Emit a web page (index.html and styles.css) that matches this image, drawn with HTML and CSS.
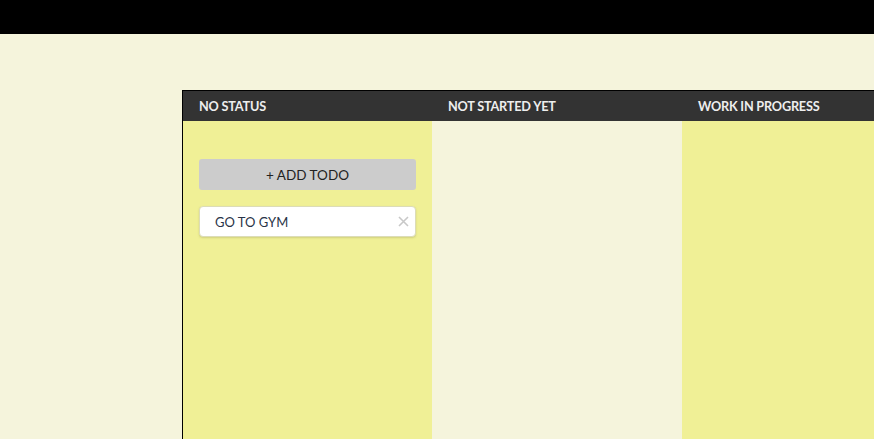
FILE: index.html
```html
<!DOCTYPE html>
<html>
<head>
<meta charset="utf-8">
<link rel="stylesheet" href="styles.css">
</head>
<body>
<div class="topbar"></div>
<main class="page">
  <section class="board">
    <div class="column yellow">
      <div class="col-head">NO STATUS</div>
      <div class="col-body">
        <button class="add-btn">+ ADD TODO</button>
        <div class="card">
          <span class="card-text">GO TO GYM</span>
          <svg class="close" width="11" height="11" viewBox="0 0 11 11"><path d="M1 1L10 10M10 1L1 10" stroke="#c8c8c8" stroke-width="1.6" fill="none"/></svg>
        </div>
      </div>
    </div>
    <div class="column beige">
      <div class="col-head">NOT STARTED YET</div>
      <div class="col-body"></div>
    </div>
    <div class="column yellow">
      <div class="col-head">WORK IN PROGRESS</div>
      <div class="col-body"></div>
    </div>
  </section>
</main>
</body>
</html>
```

FILE: styles.css
```css
html, body {
  margin: 0;
  padding: 0;
  height: 100%;
  overflow: hidden;
}
body {
  background: #f5f4dc;
  font-family: Lato, "Open Sans", sans-serif;
}
.topbar {
  height: 34px;
  background: #000;
}
.page {
  padding: 56px 0 0 182px;
}
.board {
  display: grid;
  grid-template-columns: 249px 250px 250px;
  border-left: 1px solid #000;
  border-top: 1px solid #000;
  height: 349px;
  overflow: hidden;
}
.column {
  display: flex;
  flex-direction: column;
}
.yellow .col-body { background: #f0f096; }
.beige .col-body { background: #f5f4dc; }
.col-head {
  background: #333333;
  color: #eeeeee;
  font-weight: 700;
  font-size: 12.7px;
  height: 30px;
  line-height: 31px;
  padding-left: 16px;
  letter-spacing: -0.2px;
}
.col-body {
  flex: 1;
  padding: 38px 16px 0 16px;
  display: flex;
  flex-direction: column;
  gap: 16px;
}
.add-btn {
  height: 31px;
  border: none;
  border-radius: 3px;
  background: #cccccc;
  color: #222;
  font-family: Lato, "Open Sans", sans-serif;
  font-size: 13.5px;
  padding: 0;
}
.card {
  height: 31px;
  box-sizing: border-box;
  background: #fff;
  border: 1px solid #dcdcb8;
  border-radius: 4px;
  box-shadow: 0 1px 2px rgba(150,150,80,0.35);
  display: flex;
  align-items: center;
  justify-content: space-between;
  padding: 0 6px 0 15px;
}
.card-text {
  font-size: 13px;
  color: #2a3448;
}
.close {
  display: block;
}
```
